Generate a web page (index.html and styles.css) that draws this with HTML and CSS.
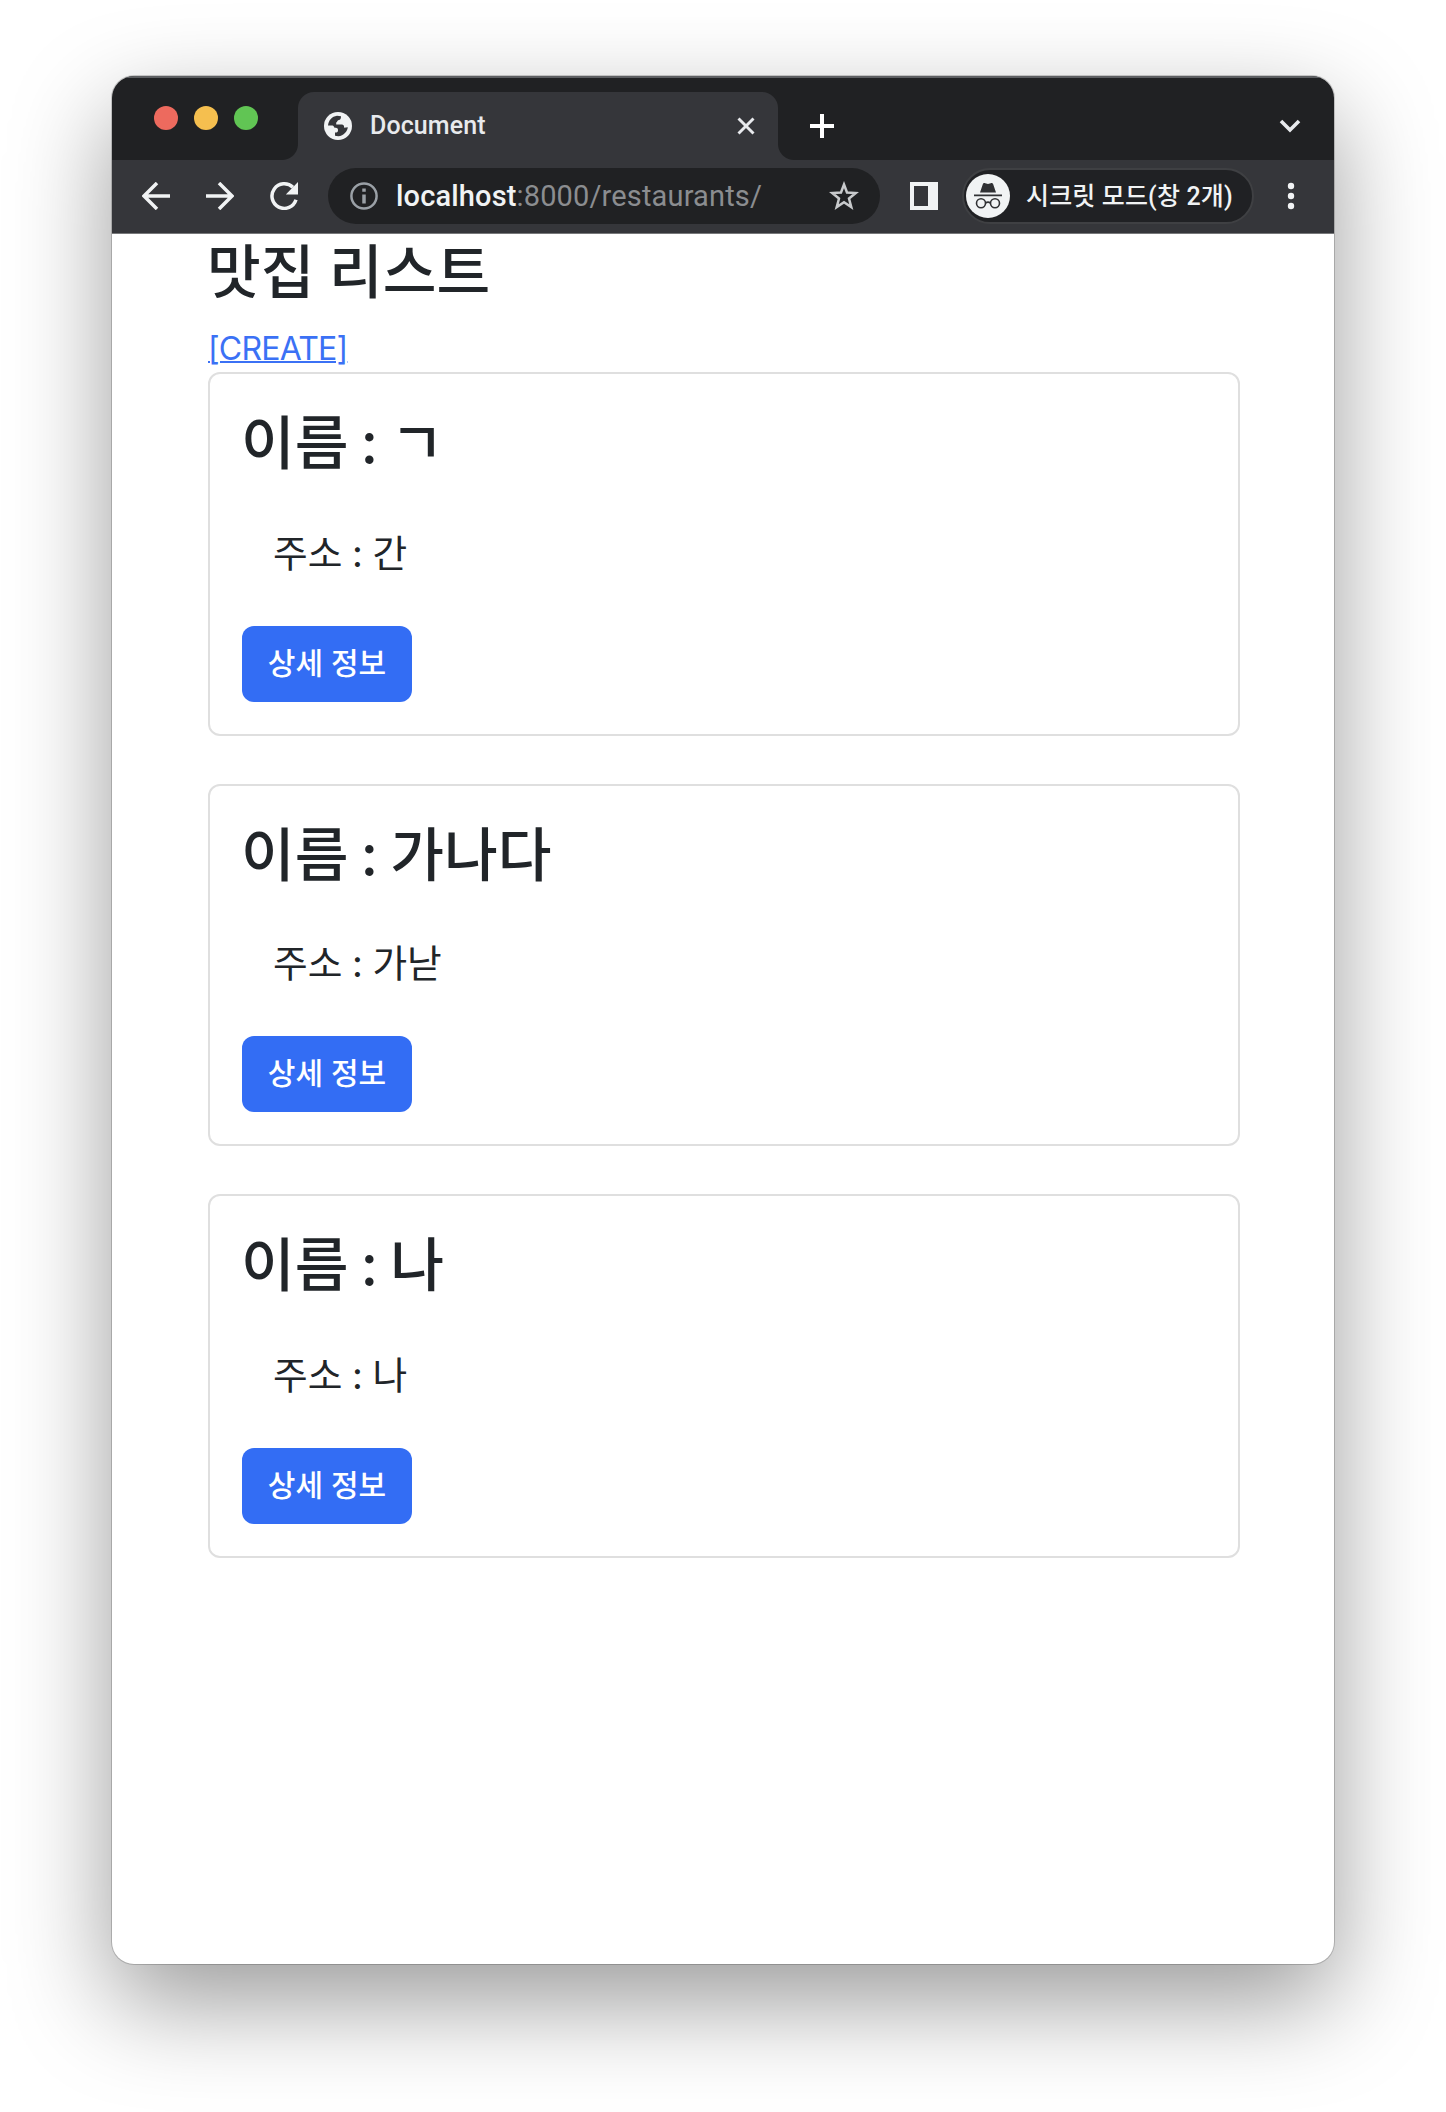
FILE: index.html
```html
<!DOCTYPE html>
<html lang="ko">
<head>
<meta charset="utf-8">
<title>Document</title>
<link rel="stylesheet" href="styles.css">
</head>
<body>
<div class="window">
  <div class="tabstrip">
    <div class="lights"><span class="light red"></span><span class="light yellow"></span><span class="light green"></span></div>
    <div class="tab">
      <svg class="globe" width="28" height="28" viewBox="0 0 28 28"><circle cx="14" cy="14" r="14" fill="#f1f3f4"/><path d="M4 13.500C4.500 8.500 8 4.500 13 3.800l4 .4c0 2.500-.6 3.600-2.200 3.800-1.800.2-1.300 2.200-2.600 2.600v2h5.600c1.800 0 2.200 1.200 2.400 3.200l3.600-.6c-.3 4-4 8.500-9.500 9.100l-3.300-.6v-3.200c2.500 0 3-.8 3-2.600 0-1.800-1.200-2-3.500-2.100-.6-1.300-1-2.300-2-2.300z" fill="#35363a"/></svg>
      <span class="tab-title">Document</span>
      <svg class="close" width="18" height="18" viewBox="0 0 18 18"><path d="M1.500 1.500l15 15M16.500 1.500l-15 15" stroke="#e8eaed" stroke-width="2.900"/></svg>
    </div>
    <svg class="plus" width="26" height="26" viewBox="0 0 26 26"><path d="M13 1v24M1 13h24" stroke="#fff" stroke-width="4"/></svg>
    <svg class="chevron" width="22" height="14" viewBox="0 0 22 14"><path d="M2 2l9 9 9-9" fill="none" stroke="#e8eaed" stroke-width="3.600"/></svg>
  </div>
  <div class="toolbar">
    <svg class="nav" width="28" height="28" viewBox="0 0 28 28"><path d="M28 14H3M15 1L2 14l13 13" fill="none" stroke="#f1f3f4" stroke-width="3.500"/></svg>
    <svg class="nav" width="28" height="28" viewBox="0 0 28 28"><path d="M0 14h25M13 1l13 13-13 13" fill="none" stroke="#f1f3f4" stroke-width="3.500"/></svg>
    <svg class="nav" width="28" height="28" viewBox="0 0 28 28"><path d="M26 17.800A12.300 12.300 0 1 1 22.900 5.300" fill="none" stroke="#f1f3f4" stroke-width="3.500"/><path d="M28 0v12.500H15.800z" fill="#f1f3f4"/></svg>
    <div class="address">
      <svg width="28" height="28" viewBox="0 0 28 28"><circle cx="14" cy="14" r="12.600" fill="none" stroke="#9aa0a6" stroke-width="2.500"/><path d="M14 12.500v9M14 6.500v3.200" stroke="#9aa0a6" stroke-width="3.500"/></svg>
      <span class="url"><b>localhost</b>:8000/restaurants/</span>
      <svg class="star" width="30" height="30" viewBox="0 0 30 30"><path d="M15 3.500l3 8 8.800.5-6.800 5.500 2.300 8.600-7.300-4.800-7.300 4.800L10 17.500 3.200 12l8.800-.5z" fill="none" stroke="#c8cacc" stroke-width="2.500"/></svg>
    </div>
    <svg class="panel" width="28" height="28" viewBox="0 0 28 28"><path fill-rule="evenodd" d="M0 0h28v28H0zM4 4h14v20H4z" fill="#f1f3f4"/></svg>
    <div class="profile">
      <svg width="44" height="44" viewBox="0 0 44 44"><circle cx="22" cy="22" r="22" fill="#f1f3f4"/><path d="M14 18.500l2.800-8.200c.4-1.200 1.300-1.500 2.400-1.100l2.800.9 2.800-.9c1.100-.4 2 0 2.400 1.100l2.800 8.200z" fill="#303134"/><path d="M8 21.300h28" stroke="#303134" stroke-width="1.800"/><g fill="none" stroke="#303134" stroke-width="1.600"><circle cx="15" cy="29.300" r="4.500"/><circle cx="29" cy="29.300" r="4.500"/><path d="M19.500 29c1.600-1.100 3.400-1.100 5 0"/></g></svg>
      <span class="profile-text">시크릿 모드(창 2개)</span>
    </div>
    <svg class="kebab" width="8" height="28" viewBox="0 0 8 28"><g fill="#f1f3f4"><circle cx="4" cy="4" r="3.200"/><circle cx="4" cy="14" r="3.200"/><circle cx="4" cy="24" r="3.200"/></g></svg>
  </div>
  <main class="page">
    <h1 class="heading">맛집 리스트</h1>
    <a class="create" href="#">[CREATE]</a>
    <div class="cards">
      <section class="card"><h2 class="heading">이름 : ㄱ</h2><p class="addr">주소 : 간</p><a class="btn" href="#">상세 정보</a></section>
      <section class="card short"><h2 class="heading">이름 : 가나다</h2><p class="addr">주소 : 가낟</p><a class="btn" href="#">상세 정보</a></section>
      <section class="card"><h2 class="heading">이름 : 나</h2><p class="addr">주소 : 나</p><a class="btn" href="#">상세 정보</a></section>
    </div>
  </main>
</div>
</body>
</html>
```
FILE: styles.css
```css
* { box-sizing: border-box; }
body { margin: 0; height: 2112px; padding: 76px 112px 0; background: #fff; overflow: hidden; }
svg { display: block; flex: none; }

.window {
  width: 1222px; height: 1888px; border-radius: 22px; overflow: hidden; background: #fff;
  box-shadow: 0 0 0 1px rgba(0,0,0,.18), 0 38px 100px rgba(0,0,0,.4);
}

.tabstrip {
  display: flex; height: 84px; padding: 16px 33px 0 42px; background: #202123;
  box-shadow: inset 0 2px 0 #5c5e61;
}
.lights { display: flex; gap: 16px; padding-top: 14px; }
.light { width: 24px; height: 24px; border-radius: 50%; }
.red { background: #ed6a5e; }
.yellow { background: #f5bf4f; }
.green { background: #61c554; }
.tab {
  position: relative; display: flex; align-items: center; width: 480px; height: 68px;
  margin-left: 40px; padding: 0 23px 0 26px; border-radius: 16px 16px 0 0; background: #35363a;
}
.tab::before, .tab::after { content: ""; position: absolute; bottom: 0; width: 16px; height: 16px; }
.tab::before { right: 100%; background: radial-gradient(circle at 0 0, transparent 15.500px, #35363a 16.500px); }
.tab::after { left: 100%; background: radial-gradient(circle at 100% 0, transparent 15.500px, #35363a 16.500px); }
.tab-title { margin-left: 18px; font: 500 25px/30px Roboto, sans-serif; letter-spacing: .1px; color: #e8eaed; }
.close { margin-left: auto; }
.plus { margin: 21px 0 0 31px; }
.chevron { margin: 27px 0 0 auto; }

.toolbar {
  display: flex; align-items: center; height: 74px; padding: 0 39px 1px 30px;
  background: #35363a; border-bottom: 1px solid #77787a;
}
.nav { margin-right: 36px; }
.address {
  display: flex; align-items: center; width: 552px; height: 56px; margin-left: -6px;
  padding: 0 21px 0 22px; border-radius: 28px; background: #202123;
}
.url { margin-left: 18px; font: 400 29px/36px Roboto, sans-serif; letter-spacing: .15px; color: #8b8d90; white-space: nowrap; }
.url b { font-weight: 500; color: #f1f3f4; }
.star { margin-left: auto; }
.panel { margin-left: 30px; }
.profile {
  display: flex; align-items: center; width: 292px; height: 56px; margin-left: 24px;
  padding-left: 2px; border: 2px solid #3f4043; border-radius: 28px; background: #202124;
}
.profile-text { margin-left: 16px; padding-top: 1px; font: 500 25px/36px Roboto, "Noto Sans CJK KR", sans-serif; letter-spacing: .15px; color: #f1f3f4; white-space: nowrap; }
.kebab { margin-left: auto; }

.page { padding: 0 94px 0 96px; color: #212529; font-family: Inter, "Noto Sans CJK KR", sans-serif; }
.heading { margin: 0; font-size: 58.400px; font-weight: 500; line-height: 76px; word-spacing: -2px; white-space: nowrap; }
.page > .heading { margin-left: -1px; word-spacing: -1px; }
.create { display: block; width: max-content; height: 48px; margin-top: 14px; font-size: 32px; line-height: 50px; letter-spacing: -.8px; color: #3b71f5; text-decoration-thickness: 2px; }
.cards { display: flex; flex-direction: column; gap: 48px; }
.card { height: 364px; padding: 31px 32px; border: 2px solid #dfdfdf; border-radius: 12px; }
.card .heading { margin-left: -1px; word-spacing: -3.500px; }
.addr { margin: 43px 0 0 31px; font-size: 37.700px; line-height: 58px; word-spacing: -1px; }
.btn {
  display: block; width: 170px; height: 76px; margin-top: 44px; border-radius: 12px; background: #336df4;
  color: #fff; font-size: 30px; font-weight: 500; line-height: 75px; text-align: center; text-decoration: none;
}
.short { height: 362px; }
.short .addr { margin-top: 41px; }
```
